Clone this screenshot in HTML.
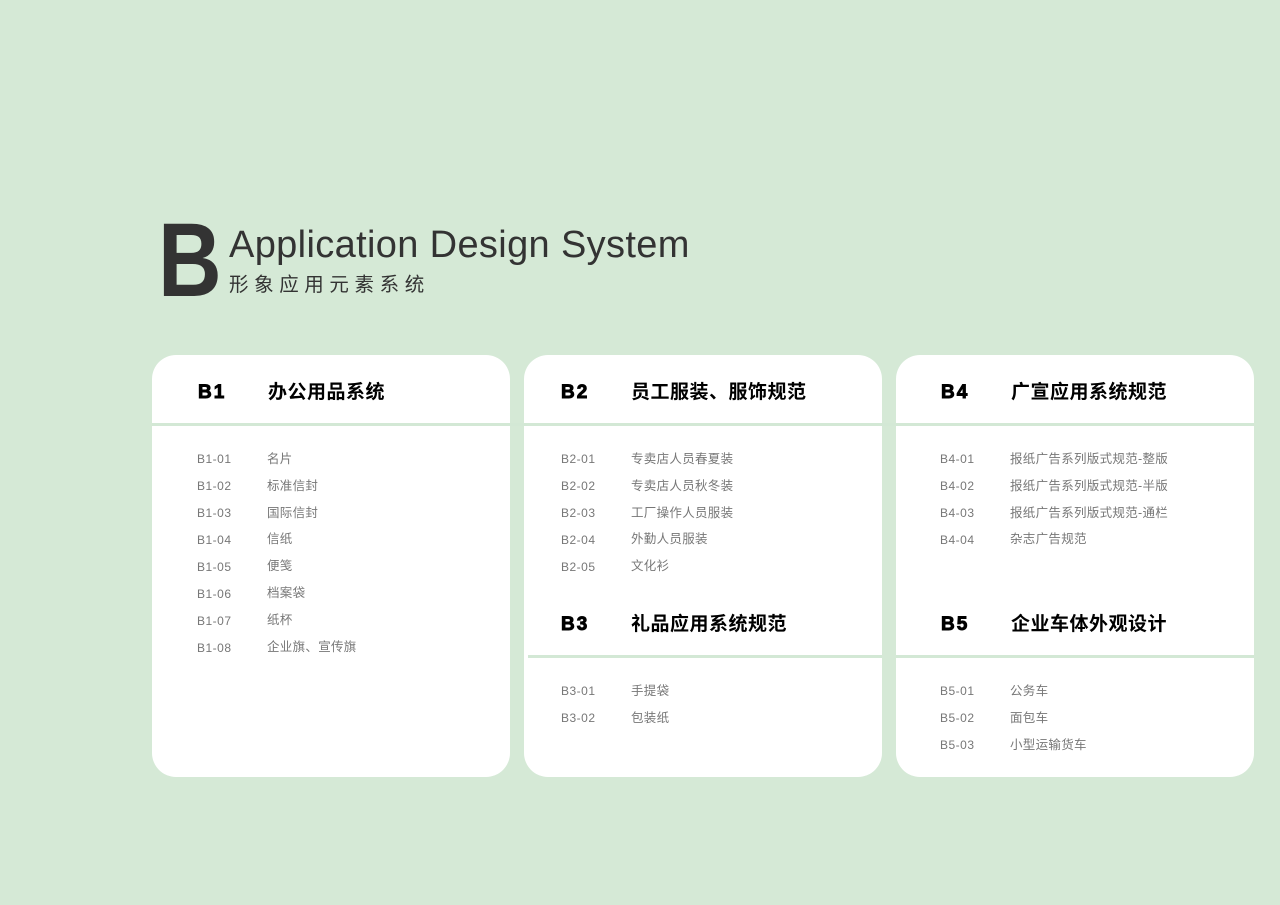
<!DOCTYPE html>
<html><head><meta charset="utf-8"><style>
*{margin:0;padding:0;box-sizing:border-box}
body{width:1280px;height:905px;background:#d5e9d6;position:relative;overflow:hidden;font-family:"Liberation Sans","Noto Sans CJK SC",sans-serif}
.a{position:absolute;white-space:nowrap}
.card{position:absolute;top:355px;width:358px;height:422px;background:#fff;border-radius:24px}
.line{position:absolute;height:3px;background:#d3e8d5}
.code{position:absolute;font-weight:900;font-size:19px;color:#000;letter-spacing:2px;line-height:20px;font-family:"Liberation Sans",sans-serif;-webkit-text-stroke:0.9px #000}
.tt{position:absolute;font-weight:bold;font-size:19px;color:#000;line-height:20px;letter-spacing:0.5px}
.ic{position:absolute;font-size:12px;color:#777;line-height:14px;letter-spacing:0.5px}
.in{position:absolute;font-size:12.5px;color:#777;line-height:14px;letter-spacing:0.3px}
</style></head><body>
<div class="a" style="left:158px;top:196px;font-size:105px;line-height:130px;color:#333;font-weight:bold;font-family:'Liberation Sans',sans-serif;transform:scaleX(0.84);transform-origin:left">B</div>
<div class="a" style="left:229px;top:223px;font-size:38px;line-height:44px;color:#333;letter-spacing:0.35px">Application Design System</div>
<div class="a" style="left:229px;top:273px;font-size:19.5px;line-height:24px;color:#333;letter-spacing:5.6px">形象应用元素系统</div>

<div class="card" style="left:152px"></div>
<div class="card" style="left:524px"></div>
<div class="card" style="left:896px"></div>
<div class="line" style="left:152px;width:1102px;top:423px"></div>
<div class="line" style="left:528px;width:354px;top:655px"></div>
<div class="line" style="left:896px;width:358px;top:655px"></div>

<div class="code" style="left:198px;top:383px">B1</div>
<div class="tt" style="left:268px;top:383px">办公用品系统</div>
<div class="code" style="left:561px;top:383px">B2</div>
<div class="tt" style="left:631px;top:383px">员工服装、服饰规范</div>
<div class="code" style="left:941px;top:383px">B4</div>
<div class="tt" style="left:1011px;top:383px">广宣应用系统规范</div>
<div class="code" style="left:561px;top:615px">B3</div>
<div class="tt" style="left:631px;top:615px">礼品应用系统规范</div>
<div class="code" style="left:941px;top:615px">B5</div>
<div class="tt" style="left:1011px;top:615px">企业车体外观设计</div>

<div class="ic" style="left:197px;top:452px">B1-01</div><div class="in" style="left:267px;top:452px">名片</div>
<div class="ic" style="left:197px;top:479px">B1-02</div><div class="in" style="left:267px;top:479px">标准信封</div>
<div class="ic" style="left:197px;top:506px">B1-03</div><div class="in" style="left:267px;top:506px">国际信封</div>
<div class="ic" style="left:197px;top:533px">B1-04</div><div class="in" style="left:267px;top:532px">信纸</div>
<div class="ic" style="left:197px;top:560px">B1-05</div><div class="in" style="left:267px;top:559px">便笺</div>
<div class="ic" style="left:197px;top:587px">B1-06</div><div class="in" style="left:267px;top:586px">档案袋</div>
<div class="ic" style="left:197px;top:614px">B1-07</div><div class="in" style="left:267px;top:613px">纸杯</div>
<div class="ic" style="left:197px;top:641px">B1-08</div><div class="in" style="left:267px;top:640px">企业旗、宣传旗</div>

<div class="ic" style="left:561px;top:452px">B2-01</div><div class="in" style="left:631px;top:452px">专卖店人员春夏装</div>
<div class="ic" style="left:561px;top:479px">B2-02</div><div class="in" style="left:631px;top:479px">专卖店人员秋冬装</div>
<div class="ic" style="left:561px;top:506px">B2-03</div><div class="in" style="left:631px;top:506px">工厂操作人员服装</div>
<div class="ic" style="left:561px;top:533px">B2-04</div><div class="in" style="left:631px;top:532px">外勤人员服装</div>
<div class="ic" style="left:561px;top:560px">B2-05</div><div class="in" style="left:631px;top:559px">文化衫</div>

<div class="ic" style="left:561px;top:684px">B3-01</div><div class="in" style="left:631px;top:684px">手提袋</div>
<div class="ic" style="left:561px;top:711px">B3-02</div><div class="in" style="left:631px;top:711px">包装纸</div>

<div class="ic" style="left:940px;top:452px">B4-01</div><div class="in" style="left:1010px;top:452px">报纸广告系列版式规范-整版</div>
<div class="ic" style="left:940px;top:479px">B4-02</div><div class="in" style="left:1010px;top:479px">报纸广告系列版式规范-半版</div>
<div class="ic" style="left:940px;top:506px">B4-03</div><div class="in" style="left:1010px;top:506px">报纸广告系列版式规范-通栏</div>
<div class="ic" style="left:940px;top:533px">B4-04</div><div class="in" style="left:1010px;top:532px">杂志广告规范</div>

<div class="ic" style="left:940px;top:684px">B5-01</div><div class="in" style="left:1010px;top:684px">公务车</div>
<div class="ic" style="left:940px;top:711px">B5-02</div><div class="in" style="left:1010px;top:711px">面包车</div>
<div class="ic" style="left:940px;top:738px">B5-03</div><div class="in" style="left:1010px;top:738px">小型运输货车</div>
</body></html>
